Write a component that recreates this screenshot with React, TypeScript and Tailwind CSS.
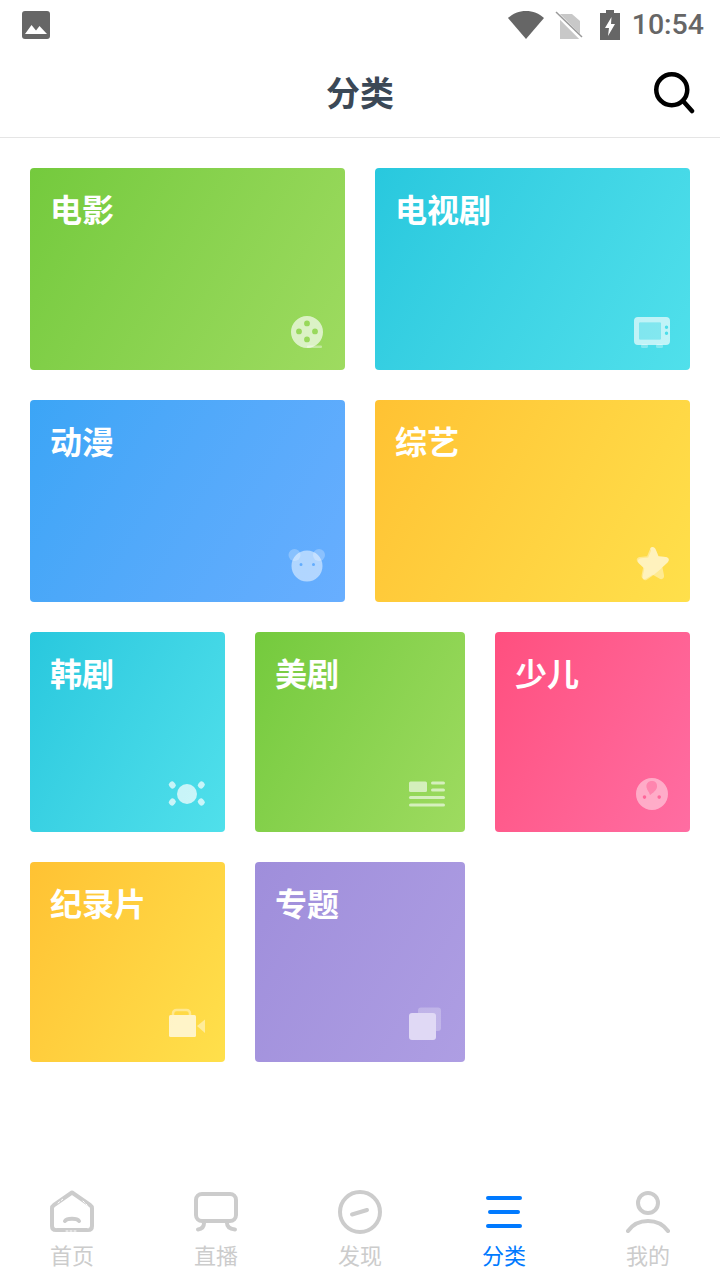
import type { ReactNode } from "react"

const CJK = "font-['Noto_Sans_CJK_SC','Noto_Sans',sans-serif]"

const FilmIcon = () => (
  <svg viewBox="0 0 40 40" className="h-10 w-10" fill="#fff">
    <rect x="20" y="33.500" width="15" height="2.500" rx="1" fillOpacity="0.4" />
    <path
      fillOpacity="0.65"
      fillRule="evenodd"
      d="M20 4a16 16 0 1 1 0 32 16 16 0 0 1 0-32zm0 4.500a2.900 2.900 0 1 0 0 5.800 2.900 2.900 0 0 0 0-5.800zm-8 8a2.900 2.900 0 1 0 0 5.800 2.900 2.900 0 0 0 0-5.800zm16 0a2.900 2.900 0 1 0 0 5.800 2.900 2.900 0 0 0 0-5.800zm-8 8a2.900 2.900 0 1 0 0 5.800 2.900 2.900 0 0 0 0-5.800z"
    />
  </svg>
)

const TvIcon = () => (
  <svg viewBox="0 0 40 40" className="h-10 w-10" fill="#fff">
    <rect x="9" y="32" width="7" height="4" rx="1.500" fillOpacity="0.3" />
    <rect x="24" y="32" width="7" height="4" rx="1.500" fillOpacity="0.3" />
    <rect x="7" y="10.500" width="22" height="17" rx="1" fillOpacity="0.3" />
    <path
      fillOpacity="0.65"
      fillRule="evenodd"
      d="M6 5h28a4 4 0 0 1 4 4v20a4 4 0 0 1-4 4H6a4 4 0 0 1-4-4V9a4 4 0 0 1 4-4zm2 5.500a1 1 0 0 0-1 1v15a1 1 0 0 0 1 1h20a1 1 0 0 0 1-1v-15a1 1 0 0 0-1-1H8zm26.500 3a1.700 1.700 0 1 0 0 3.400 1.700 1.700 0 0 0 0-3.400zm0 6a1.700 1.700 0 1 0 0 3.400 1.700 1.700 0 0 0 0-3.400z"
    />
  </svg>
)

const BearIcon = () => (
  <svg viewBox="0 0 40 40" className="h-10 w-10" fill="#fff">
    <circle cx="7.500" cy="11" r="6" fillOpacity="0.25" />
    <circle cx="32" cy="11" r="6" fillOpacity="0.25" />
    <path
      fillOpacity="0.5"
      fillRule="evenodd"
      d="M20 6.500a15.500 15.500 0 1 1 0 31 15.500 15.500 0 0 1 0-31zm-6 12.500a1.500 1.500 0 1 0 0 3 1.500 1.500 0 0 0 0-3zm12.500 0a1.500 1.500 0 1 0 0 3 1.500 1.500 0 0 0 0-3z"
    />
  </svg>
)

const StarIcon = () => (
  <svg viewBox="0 0 40 40" className="h-10 w-10" fill="#fff">
    <path
      fillOpacity="0.4"
      d="M20.500 3c1.500 0 2.600 1 3.200 2.500l2.800 6.800 7.300.7c3 .3 4 3 2 5.200l-5.400 5.100 1.600 8c.6 3.200-2 4.800-4.700 3.300l-6.500-3.800-6.500 3.800c-2.700 1.500-5.300-.1-4.700-3.300l1.600-8-5.400-5.100c-2-2.200-1-4.900 2-5.200l7.300-.7 2.800-6.800C17.900 4 19 3 20.500 3z"
    />
    <path
      fillOpacity="0.4"
      d="M20.500 3c1.500 0 2.600 1 3.200 2.500l2.800 6.800 7.300.7c3 .3 4 3 2 5.200l-5.400 5.100C26 28 19 33 14 36.300c-2.300.4-3.800-1.200-3.300-3.700l1.600-8-5.400-5.100c-2-2.200-1-4.900 2-5.200l7.300-.7 2.800-6.800C17.900 4 19 3 20.500 3z"
    />
  </svg>
)

const SunIcon = () => (
  <svg viewBox="0 0 40 40" className="h-10 w-10" fill="#fff" fillOpacity="0.7">
    <circle cx="20" cy="20" r="10" />
    <rect x="2.300" y="7.500" width="6" height="7" rx="2.500" transform="rotate(-40 5.300 11)" />
    <rect x="31.300" y="7.500" width="6" height="7" rx="2.500" transform="rotate(40 34.300 11)" />
    <rect x="2.300" y="24.500" width="6" height="7" rx="2.500" transform="rotate(40 5.300 28)" />
    <rect x="31.300" y="24.500" width="6" height="7" rx="2.500" transform="rotate(-40 34.300 28)" />
  </svg>
)

const NewsIcon = () => (
  <svg viewBox="0 0 40 40" className="h-10 w-10" fill="#fff" fillOpacity="0.6">
    <rect x="2" y="7.500" width="18" height="10.500" rx="1.500" />
    <rect x="24" y="7.500" width="14" height="3" rx="1.500" />
    <rect x="24" y="14.500" width="14" height="3" rx="1.500" />
    <rect x="2" y="22" width="36" height="3" rx="1.500" />
    <rect x="2" y="29.500" width="36" height="3" rx="1.500" />
  </svg>
)

const BabyIcon = () => (
  <svg viewBox="0 0 40 40" className="h-10 w-10" fill="#fff">
    <path d="M20 7c-3.200 0-5.500 2.200-5.500 5.200 0 3.500 3 5.300 3.500 8.800 2.600-2 7-5 7-8.800C25 9.200 23.200 7 20 7z" fillOpacity="0.2" />
    <path
      fillOpacity="0.45"
      fillRule="evenodd"
      d="M20 4a16 16 0 1 1 0 32 16 16 0 0 1 0-32zm0 3c-3.200 0-5.500 2.200-5.500 5.200 0 3.500 3 5.300 3.500 8.800 2.600-2 7-5 7-8.800C25 9.200 23.200 7 20 7zm-7.500 14.300a1.800 1.800 0 1 0 0 3.600 1.800 1.800 0 0 0 0-3.600zm14.700 0a1.800 1.800 0 1 0 0 3.600 1.800 1.800 0 0 0 0-3.600z"
    />
  </svg>
)

const CameraIcon = () => (
  <svg viewBox="0 0 40 40" className="h-10 w-10" fill="#fff">
    <path d="M6 11V9.500C6 7.500 7.500 6 9.500 6h10c2 0 3.500 1.500 3.500 3.500V11" fill="none" stroke="#fff" strokeOpacity="0.4" strokeWidth="2.500" />
    <rect x="2" y="11" width="27" height="22" rx="1.500" fillOpacity="0.7" />
    <path d="M30 22 38 15.500v13.500z" fillOpacity="0.45" strokeLinejoin="round" />
  </svg>
)

const CopyIcon = () => (
  <svg viewBox="0 0 40 40" className="h-10 w-10" fill="#fff">
    <rect x="11" y="3.500" width="23" height="23.500" rx="3" fillOpacity="0.25" />
    <rect x="2" y="9" width="27" height="27" rx="3" fill="#e0d9f5" />
  </svg>
)

type Item = { title: string; gradient: string; icon: ReactNode }

const Card = ({ title, gradient, icon, tall }: Item & { tall?: boolean }) => (
  <div className={`flex flex-col justify-between rounded pr-[18px] pb-[18px] pl-[20px] ${tall ? "h-[202px]" : "h-[200px]"} ${gradient}`}>
    <div className="pt-[17px] text-[32px] leading-[46px] font-bold text-white">{title}</div>
    <div className="self-end">{icon}</div>
  </div>
)

const GREEN = "bg-linear-120 from-[#74ca3d] to-[#9edb60]"
const CYAN = "bg-linear-120 from-[#28c8de] to-[#50e0eb]"
const BLUE = "bg-linear-120 from-[#3ba5f6] to-[#68aeff]"
const YELLOW = "bg-linear-120 from-[#ffc233] to-[#ffe04b]"
const PINK = "bg-linear-120 from-[#ff4f7f] to-[#ff6da2]"
const PURPLE = "bg-linear-120 from-[#9f8edb] to-[#ae9ee3]"

const NavHome = () => (
  <svg viewBox="0 0 44 44" className="h-11 w-11" fill="none" stroke="#ccc" strokeWidth="4" strokeLinecap="round" strokeLinejoin="round">
    <path d="M22 2.500 40 15c1.300.9 2 2 2 3.500V36c0 2.800-1.500 4-4 4H6c-2.500 0-4-1.200-4-4V18.500C2 17 2.700 15.900 4 15z" />
    <path d="M15 31c2-3 12-3 14 0" />
    <path d="M8 13 13 9M33 11l5 5M16 41h12M5 36l1 2M38 33v5" stroke="#fff" strokeWidth="1" strokeDasharray="2 2" />
  </svg>
)

const NavLive = () => (
  <svg viewBox="0 0 44 44" className="h-11 w-11" fill="none" stroke="#ccc" strokeWidth="4" strokeLinecap="round" strokeLinejoin="round">
    <rect x="2" y="4" width="40" height="27" rx="6" />
    <path d="M10 33c0 4-2 6-6 6.500M33 33c0 4 3 6 8 6.500" />
  </svg>
)

const NavFind = () => (
  <svg viewBox="0 0 44 44" className="h-11 w-11" fill="none" stroke="#ccc" strokeWidth="4" strokeLinecap="round">
    <circle cx="22" cy="22" r="20" />
    <path d="M14 24.500 29 20" />
  </svg>
)

const NavCategory = () => (
  <svg viewBox="0 0 44 44" className="h-11 w-11" fill="none" stroke="#007aff" strokeWidth="4" strokeLinecap="round">
    <path d="M6 8h32M8 22h28M6 36h32" />
  </svg>
)

const NavMine = () => (
  <svg viewBox="0 0 44 44" className="h-11 w-11" fill="none" stroke="#ccc" strokeWidth="4" strokeLinecap="round">
    <circle cx="22" cy="13" r="10" />
    <path d="M2 41c5-7 12-10 20-10s15 3 20 10" />
  </svg>
)

const NAV = [
  { label: "首页", icon: <NavHome /> },
  { label: "直播", icon: <NavLive /> },
  { label: "发现", icon: <NavFind /> },
  { label: "分类", icon: <NavCategory />, active: true },
  { label: "我的", icon: <NavMine /> },
]

export default function App() {
  return (
    <div className={`flex h-[1280px] w-[720px] flex-col overflow-hidden bg-white ${CJK}`}>
      {/* status bar */}
      <div className="flex h-[50px] items-center justify-between pr-4 pl-[22px]">
        <svg viewBox="0 0 28 28" className="h-7 w-7">
          <rect width="28" height="28" rx="3" fill="#666" />
          <path d="M3 23 9.500 14l4.500 5.500 3.500-4.500L25 23z" fill="#fff" />
        </svg>
        <div className="flex items-center">
          <svg viewBox="0 0 36 28" className="h-7 w-9">
            <path d="M0 7C5 2.500 11 0 18 0s13 2.500 18 7L18 28z" fill="#666" />
          </svg>
          <svg viewBox="0 0 28 28" className="ml-[11px] h-7 w-7">
            <path d="M5 3h12l8 7v18H5z" fill="#c8c8c8" />
            <path d="M1 2 26 27" stroke="#fff" strokeWidth="4" />
            <path d="M1 1 27 26" stroke="#999" strokeWidth="1.500" />
          </svg>
          <svg viewBox="0 0 20 30" className="ml-[17px] h-[30px] w-5">
            <path d="M6 0h8v3h6v27H0V3h6z" fill="#666" />
            <path d="M11.500 7 5 18h4l-1 8 7-12h-4z" fill="#fff" />
          </svg>
          <span className="ml-3 font-['Roboto',sans-serif] text-[28.500px] leading-none font-medium text-[#666]">10:54</span>
        </div>
      </div>

      {/* header */}
      <header className="relative flex h-[88px] items-center justify-center border-b border-[#e5e5e5] pb-1">
        <h1 className="text-[34px] leading-none font-bold text-[#3b4856]">分类</h1>
        <svg viewBox="0 0 44 44" className="absolute top-[20px] right-[25px] h-11 w-11" fill="none" stroke="#000" strokeWidth="4.500" strokeLinecap="round">
          <circle cx="20.750" cy="19.750" r="15.500" />
          <path d="M32.500 31.500 41 41" />
        </svg>
      </header>

      {/* category cards */}
      <main className="flex flex-1 flex-col gap-[30px] px-[30px] pt-[30px]">
        <div className="grid grid-cols-2 gap-[30px]">
          <Card tall title="电影" gradient={GREEN} icon={<FilmIcon />} />
          <Card tall title="电视剧" gradient={CYAN} icon={<TvIcon />} />
          <Card tall title="动漫" gradient={BLUE} icon={<BearIcon />} />
          <Card tall title="综艺" gradient={YELLOW} icon={<StarIcon />} />
        </div>
        <div className="grid grid-cols-[195px_210px_195px] gap-[30px]">
          <Card title="韩剧" gradient={CYAN} icon={<SunIcon />} />
          <Card title="美剧" gradient={GREEN} icon={<NewsIcon />} />
          <Card title="少儿" gradient={PINK} icon={<BabyIcon />} />
          <Card title="纪录片" gradient={YELLOW} icon={<CameraIcon />} />
          <Card title="专题" gradient={PURPLE} icon={<CopyIcon />} />
        </div>
      </main>

      {/* bottom nav */}
      <nav className="flex h-[92px] pt-[2px]">
        {NAV.map(item => (
          <div key={item.label} className="flex flex-1 flex-col items-center">
            {item.icon}
            <span className={`mt-1 text-[22px] leading-[32px] ${item.active ? "text-[#007aff]" : "text-[#ccc]"}`}>
              {item.label}
            </span>
          </div>
        ))}
      </nav>
    </div>
  )
}
